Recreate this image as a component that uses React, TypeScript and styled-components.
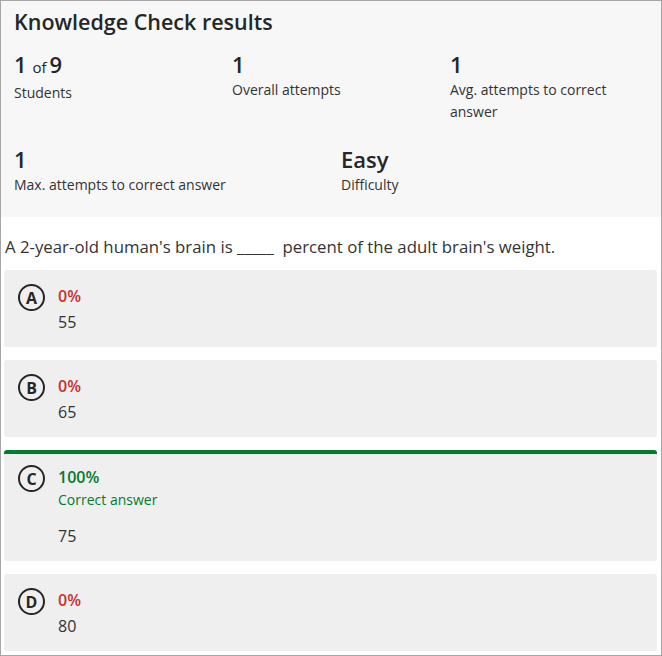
import React from "react";
import styled, { createGlobalStyle } from "styled-components";

const GlobalStyle = createGlobalStyle`
  body {
    margin: 0;
    font-family: "Open Sans", "Noto Sans", sans-serif;
    color: #262626;
    background: #ffffff;
  }
`;

const Frame = styled.div`
  width: 662px;
  height: 656px;
  box-sizing: border-box;
  border: 1px solid #a6a6a6;
  overflow: hidden;
  background: #ffffff;
`;

const Summary = styled.section`
  background: #f7f7f7;
  padding: 6px 0 21px 13px;
  overflow: hidden;
`;

const Title = styled.h1`
  margin: 0 0 13px 0;
  font-size: 21.5px;
  line-height: 30px;
  font-weight: 600;
  color: #262626;
`;

const StatRow = styled.div<{ cols: number }>`
  display: grid;
  grid-template-columns: repeat(${(p) => p.cols}, ${(p) => 654 / p.cols}px);
  & + & {
    margin-top: 22px;
  }
`;

const Stat = styled.div`
  padding-right: 16px;
`;

const StatValue = styled.div`
  font-size: 22px;
  line-height: 28px;
  font-weight: 600;
  color: #262626;
`;

const StatOf = styled.span`
  font-size: 15px;
  font-weight: 400;
  margin: 0 3px 0 2px;
`;

const StatLabel = styled.div`
  font-size: 14px;
  line-height: 22px;
  color: #333333;
  margin-top: 1px;
`;

const Body = styled.section`
  padding: 18px 4px 0 3px;
`;

const Question = styled.p`
  margin: 0 0 11px 0;
  padding-left: 1px;
  font-size: 16.8px;
  line-height: 24px;
  color: #333333;
`;

const AnswerList = styled.div`
  display: flex;
  flex-direction: column;
  gap: 13px;
`;

const Card = styled.div<{ correct?: boolean }>`
  display: flex;
  gap: 13px;
  background: #efefef;
  border-radius: 3px;
  padding: ${(p) => (p.correct ? "11px" : "14px")} 14px 13px 14px;
  border-top: ${(p) => (p.correct ? "4px solid #037b2d" : "none")};
`;

const Letter = styled.div`
  flex: none;
  width: 27px;
  height: 27px;
  box-sizing: border-box;
  border: 2px solid #262626;
  border-radius: 50%;
  display: flex;
  align-items: center;
  justify-content: center;
  font-size: 16px;
  font-weight: 700;
  color: #262626;
`;

const AnswerBody = styled.div`
  display: flex;
  flex-direction: column;
`;

const Percent = styled.div<{ correct?: boolean }>`
  font-size: 16px;
  line-height: 24px;
  font-weight: 600;
  color: ${(p) => (p.correct ? "#037b2d" : "#c9302c")};
`;

const CorrectNote = styled.div`
  font-size: 14px;
  line-height: 21px;
  color: #037b2d;
  margin-bottom: 12px;
`;

const AnswerText = styled.div`
  font-size: 16px;
  line-height: 24px;
  color: #333333;
  margin-top: 2px;
`;

const answers = [
  { letter: "A", percent: "0%", text: "55", correct: false },
  { letter: "B", percent: "0%", text: "65", correct: false },
  { letter: "C", percent: "100%", text: "75", correct: true },
  { letter: "D", percent: "0%", text: "80", correct: false },
];

export default function App() {
  return (
    <>
      <GlobalStyle />
      <Frame>
        <Summary>
          <Title>Knowledge Check results</Title>
          <StatRow cols={3}>
            <Stat>
              <StatValue>
                1<StatOf> of</StatOf>9
              </StatValue>
              <StatLabel>Students</StatLabel>
            </Stat>
            <Stat>
              <StatValue>1</StatValue>
              <StatLabel>Overall attempts</StatLabel>
            </Stat>
            <Stat>
              <StatValue>1</StatValue>
              <StatLabel>
                Avg. attempts to correct
                <br />
                answer
              </StatLabel>
            </Stat>
          </StatRow>
          <StatRow cols={2}>
            <Stat>
              <StatValue>1</StatValue>
              <StatLabel>Max. attempts to correct answer</StatLabel>
            </Stat>
            <Stat>
              <StatValue>Easy</StatValue>
              <StatLabel>Difficulty</StatLabel>
            </Stat>
          </StatRow>
        </Summary>
        <Body>
          <Question>
            A 2-year-old human's brain is _____&nbsp; percent of the adult
            brain's weight.
          </Question>
          <AnswerList>
            {answers.map((a) => (
              <Card key={a.letter} correct={a.correct}>
                <Letter>{a.letter}</Letter>
                <AnswerBody>
                  <Percent correct={a.correct}>{a.percent}</Percent>
                  {a.correct && <CorrectNote>Correct answer</CorrectNote>}
                  <AnswerText>{a.text}</AnswerText>
                </AnswerBody>
              </Card>
            ))}
          </AnswerList>
        </Body>
      </Frame>
    </>
  );
}
